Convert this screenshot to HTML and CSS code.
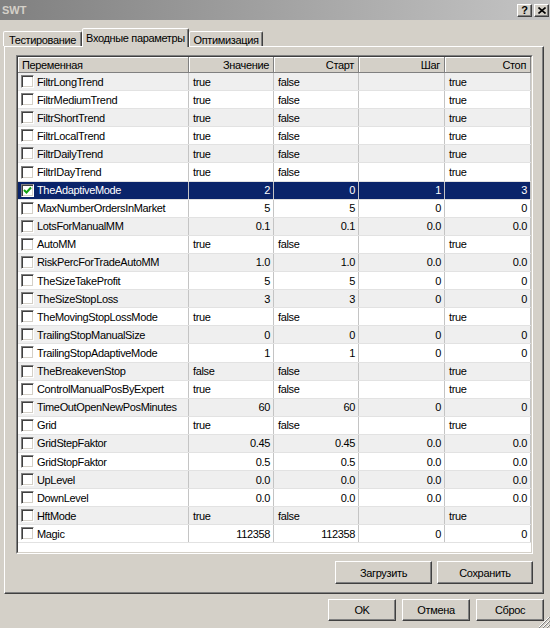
FILE: index.html
```html
<!DOCTYPE html>
<html>
<head>
<meta charset="utf-8">
<title>SWT</title>
<link rel="stylesheet" href="styles.css">
</head>
<body>
<div class="titlebar">
  <span class="title">SWT</span>
  <div class="caption-btns">
    <span class="cbtn">?</span>
    <span class="cbtn"><svg width="8" height="7" viewBox="0 0 8 7"><path d="M0.5 0.5 L7.5 6.5 M7.5 0.5 L0.5 6.5" stroke="#000" stroke-width="1.6"/></svg></span>
  </div>
</div>
<div class="tabs">
  <div class="tab t1">Тестирование</div>
  <div class="tab t2 active">Входные параметры</div>
  <div class="tab t3">Оптимизация</div>
</div>
<div class="panel">
  <div class="frame">
    <div class="frame-in">
      <div class="row head">
        <div class="cell name">Переменная</div>
        <div class="cell num">Значение</div>
        <div class="cell num">Старт</div>
        <div class="cell num">Шаг</div>
        <div class="cell num">Стоп</div>
      </div>
      <div class="row alt"><div class="cell name"><span class="cb"></span>FiltrLongTrend</div><div class="cell">true</div><div class="cell">false</div><div class="cell"></div><div class="cell">true</div></div>
      <div class="row"><div class="cell name"><span class="cb"></span>FiltrMediumTrend</div><div class="cell">true</div><div class="cell">false</div><div class="cell"></div><div class="cell">true</div></div>
      <div class="row alt"><div class="cell name"><span class="cb"></span>FiltrShortTrend</div><div class="cell">true</div><div class="cell">false</div><div class="cell"></div><div class="cell">true</div></div>
      <div class="row"><div class="cell name"><span class="cb"></span>FiltrLocalTrend</div><div class="cell">true</div><div class="cell">false</div><div class="cell"></div><div class="cell">true</div></div>
      <div class="row alt"><div class="cell name"><span class="cb"></span>FiltrDailyTrend</div><div class="cell">true</div><div class="cell">false</div><div class="cell"></div><div class="cell">true</div></div>
      <div class="row"><div class="cell name"><span class="cb"></span>FiltrIDayTrend</div><div class="cell">true</div><div class="cell">false</div><div class="cell"></div><div class="cell">true</div></div>
      <div class="row sel"><div class="cell name"><span class="cb checked"><svg width="9" height="9" viewBox="0 0 9 9"><path d="M1 4 L3.5 6.5 L8 1.5" fill="none" stroke="#13a313" stroke-width="2"/></svg></span>TheAdaptiveMode</div><div class="cell num">2</div><div class="cell num">0</div><div class="cell num">1</div><div class="cell num">3</div></div>
      <div class="row"><div class="cell name"><span class="cb"></span>MaxNumberOrdersInMarket</div><div class="cell num">5</div><div class="cell num">5</div><div class="cell num">0</div><div class="cell num">0</div></div>
      <div class="row alt"><div class="cell name"><span class="cb"></span>LotsForManualMM</div><div class="cell num">0.1</div><div class="cell num">0.1</div><div class="cell num">0.0</div><div class="cell num">0.0</div></div>
      <div class="row"><div class="cell name"><span class="cb"></span>AutoMM</div><div class="cell">true</div><div class="cell">false</div><div class="cell"></div><div class="cell">true</div></div>
      <div class="row alt"><div class="cell name"><span class="cb"></span>RiskPercForTradeAutoMM</div><div class="cell num">1.0</div><div class="cell num">1.0</div><div class="cell num">0.0</div><div class="cell num">0.0</div></div>
      <div class="row"><div class="cell name"><span class="cb"></span>TheSizeTakeProfit</div><div class="cell num">5</div><div class="cell num">5</div><div class="cell num">0</div><div class="cell num">0</div></div>
      <div class="row alt"><div class="cell name"><span class="cb"></span>TheSizeStopLoss</div><div class="cell num">3</div><div class="cell num">3</div><div class="cell num">0</div><div class="cell num">0</div></div>
      <div class="row"><div class="cell name"><span class="cb"></span>TheMovingStopLossMode</div><div class="cell">true</div><div class="cell">false</div><div class="cell"></div><div class="cell">true</div></div>
      <div class="row alt"><div class="cell name"><span class="cb"></span>TrailingStopManualSize</div><div class="cell num">0</div><div class="cell num">0</div><div class="cell num">0</div><div class="cell num">0</div></div>
      <div class="row"><div class="cell name"><span class="cb"></span>TrailingStopAdaptiveMode</div><div class="cell num">1</div><div class="cell num">1</div><div class="cell num">0</div><div class="cell num">0</div></div>
      <div class="row alt"><div class="cell name"><span class="cb"></span>TheBreakevenStop</div><div class="cell">false</div><div class="cell">false</div><div class="cell"></div><div class="cell">true</div></div>
      <div class="row"><div class="cell name"><span class="cb"></span>ControlManualPosByExpert</div><div class="cell">true</div><div class="cell">false</div><div class="cell"></div><div class="cell">true</div></div>
      <div class="row alt"><div class="cell name"><span class="cb"></span>TimeOutOpenNewPosMinutes</div><div class="cell num">60</div><div class="cell num">60</div><div class="cell num">0</div><div class="cell num">0</div></div>
      <div class="row"><div class="cell name"><span class="cb"></span>Grid</div><div class="cell">true</div><div class="cell">false</div><div class="cell"></div><div class="cell">true</div></div>
      <div class="row alt"><div class="cell name"><span class="cb"></span>GridStepFaktor</div><div class="cell num">0.45</div><div class="cell num">0.45</div><div class="cell num">0.0</div><div class="cell num">0.0</div></div>
      <div class="row"><div class="cell name"><span class="cb"></span>GridStopFaktor</div><div class="cell num">0.5</div><div class="cell num">0.5</div><div class="cell num">0.0</div><div class="cell num">0.0</div></div>
      <div class="row alt"><div class="cell name"><span class="cb"></span>UpLevel</div><div class="cell num">0.0</div><div class="cell num">0.0</div><div class="cell num">0.0</div><div class="cell num">0.0</div></div>
      <div class="row"><div class="cell name"><span class="cb"></span>DownLevel</div><div class="cell num">0.0</div><div class="cell num">0.0</div><div class="cell num">0.0</div><div class="cell num">0.0</div></div>
      <div class="row alt"><div class="cell name"><span class="cb"></span>HftMode</div><div class="cell">true</div><div class="cell">false</div><div class="cell"></div><div class="cell">true</div></div>
      <div class="row"><div class="cell name"><span class="cb"></span>Magic</div><div class="cell num">112358</div><div class="cell num">112358</div><div class="cell num">0</div><div class="cell num">0</div></div>
    </div>
  </div>
  <div class="panel-actions">
    <button class="btn w-load">Загрузить</button>
    <button class="btn w-save">Сохранить</button>
  </div>
</div>
<div class="dialog-actions">
  <button class="btn w-dlg">OK</button>
  <button class="btn w-dlg">Отмена</button>
  <button class="btn w-dlg">Сброс</button>
</div>
<svg class="grip" width="12" height="12" viewBox="0 0 12 12">
  <path d="M11 1 L1 11 M11 5 L5 11 M11 9 L9 11" stroke="#fff" stroke-width="1"/>
  <path d="M12 1 L1 12 M12 5 L5 12 M12 9 L9 12" stroke="#808080" stroke-width="1"/>
</svg>
</body>
</html>
```

FILE: styles.css
```css
* { box-sizing: border-box; }
html, body { margin: 0; padding: 0; }
body {
  width: 550px;
  height: 628px;
  overflow: hidden;
  position: relative;
  background: #d4d0c8;
  font-family: "Liberation Sans", Arial, sans-serif;
  font-size: 11px;
  letter-spacing: -0.35px;
  color: #000;
}

.titlebar {
  height: 20px;
  background: linear-gradient(to right, #808080, #c4c4c4);
  display: flex;
  align-items: center;
  padding: 0 1px 0 2px;
}
.title { color: #d4d0c8; font-weight: bold; font-size: 11px; letter-spacing: 0; }
.caption-btns { margin-left: auto; display: flex; gap: 2px; }
.cbtn {
  width: 15px;
  height: 13px;
  background: #d4d0c8;
  border: 1px solid;
  border-color: #fff #404040 #404040 #fff;
  box-shadow: inset -1px -1px #808080;
  display: flex;
  align-items: center;
  justify-content: center;
  font-weight: bold;
  font-size: 11px;
  line-height: 1;
  letter-spacing: 0;
}

.tabs {
  display: flex;
  align-items: flex-end;
  height: 18px;
  margin-top: 8px;
  padding-left: 3px;
  position: relative;
  z-index: 1;
}
.tab {
  height: 15px;
  background: #d4d0c8;
  border: 1px solid;
  border-bottom: none;
  border-color: #fff #404040 transparent #fff;
  border-radius: 2px 2px 0 0;
  box-shadow: inset -1px 0 #808080;
  display: flex;
  align-items: center;
  justify-content: center;
  white-space: nowrap;
  padding-top: 1px;
}
.t1 { width: 79px; }
.t2 { width: 107px; }
.t3 { width: 74px; }
.tab.active {
  height: 19px;
  margin-bottom: -1px;
  padding-top: 0;
  padding-bottom: 1px;
}

.panel {
  margin-left: 4px;
  width: 540px;
  height: 548px;
  border: 1px solid;
  border-color: #fff #404040 #404040 #fff;
  box-shadow: inset -1px -1px #808080;
  padding: 8px 10px 0 11px;
}
.frame {
  height: 499px;
  border: 1px solid;
  border-color: #808080 #fff #fff #808080;
}
.frame-in {
  height: 100%;
  border: 1px solid;
  border-color: #404040 #d4d0c8 #d4d0c8 #404040;
  background: #fff;
  overflow: hidden;
}

.row {
  display: flex;
  height: 18.1px;
  border-bottom: 1px solid #e2e2e2;
}
.row.alt { background: #efefef; }
.row.sel { background: #0a246a; color: #fff; }
.cell {
  flex: none;
  width: 85px;
  border-right: 1px solid #c4c4c4;
  display: flex;
  align-items: center;
  padding: 0 3px 0 4px;
  white-space: nowrap;
  overflow: hidden;
}
.cell:nth-child(4), .cell:nth-child(5) { width: 86px; }
.cell.name { width: 171px; padding-left: 3px; }
.cell.num { justify-content: flex-end; }

.row.head {
  height: 16px;
  background: #d4d0c8;
  border-bottom: none;
}
.row.head .cell {
  border-right: 1px solid #808080;
  border-bottom: 1px solid #808080;
  box-shadow: inset 1px 1px #fff;
  padding: 0 4px 0 4px;
}

.cb {
  flex: none;
  width: 13px;
  height: 13px;
  margin-right: 3px;
  background: #fff;
  border: 1px solid;
  border-color: #808080 #fff #fff #808080;
  box-shadow: inset 1px 1px #404040, inset -1px -1px #d4d0c8;
  display: flex;
  align-items: center;
  justify-content: center;
}
.cb svg { display: block; }

.btn {
  font-family: inherit;
  font-size: 11px;
  letter-spacing: -0.35px;
  color: #000;
  background: #d4d0c8;
  border: 1px solid;
  border-color: #fff #404040 #404040 #fff;
  box-shadow: inset -1px -1px #808080;
  padding: 0;
  margin: 0;
}
.panel-actions {
  display: flex;
  justify-content: flex-end;
  gap: 5px;
  margin-top: 7px;
}
.panel-actions .btn { height: 23px; }
.w-load { width: 97px; }
.w-save { width: 96px; }

.dialog-actions {
  display: flex;
  justify-content: flex-end;
  gap: 6px;
  margin-top: 5px;
  padding-right: 6px;
}
.dialog-actions .btn { height: 22px; }
.w-dlg { width: 68px; }

.grip { position: absolute; right: 0; bottom: 0; }
```
